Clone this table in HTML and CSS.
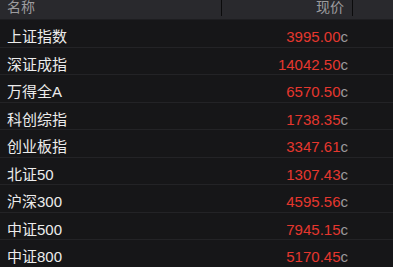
FILE: index.html
```html
<!DOCTYPE html>
<html lang="zh">
<head>
<meta charset="utf-8">
<link rel="stylesheet" href="styles.css">
</head>
<body>
<div class="table">
  <div class="head">
    <div class="c-name">名称</div>
    <div class="c-price">现价</div>
    <div class="c-rest"></div>
  </div>
  <div class="row"><div class="c-name">上证指数</div><div class="c-price"><span class="num">3995.00</span><span class="unit">c</span></div><div class="c-rest"></div></div>
  <div class="row"><div class="c-name">深证成指</div><div class="c-price"><span class="num">14042.50</span><span class="unit">c</span></div><div class="c-rest"></div></div>
  <div class="row"><div class="c-name">万得全A</div><div class="c-price"><span class="num">6570.50</span><span class="unit">c</span></div><div class="c-rest"></div></div>
  <div class="row"><div class="c-name">科创综指</div><div class="c-price"><span class="num">1738.35</span><span class="unit">c</span></div><div class="c-rest"></div></div>
  <div class="row"><div class="c-name">创业板指</div><div class="c-price"><span class="num">3347.61</span><span class="unit">c</span></div><div class="c-rest"></div></div>
  <div class="row"><div class="c-name">北证50</div><div class="c-price"><span class="num">1307.43</span><span class="unit">c</span></div><div class="c-rest"></div></div>
  <div class="row"><div class="c-name">沪深300</div><div class="c-price"><span class="num">4595.56</span><span class="unit">c</span></div><div class="c-rest"></div></div>
  <div class="row"><div class="c-name">中证500</div><div class="c-price"><span class="num">7945.15</span><span class="unit">c</span></div><div class="c-rest"></div></div>
  <div class="row"><div class="c-name">中证800</div><div class="c-price"><span class="num">5170.45</span><span class="unit">c</span></div><div class="c-rest"></div></div>
</div>
</body>
</html>
```
FILE: styles.css
```css
html, body {
  margin: 0;
  padding: 0;
  background: #161618;
  overflow: hidden;
}
.table {
  width: 393px;
  font-family: "Liberation Sans", "Noto Sans CJK SC", sans-serif;
}
.head {
  display: flex;
  height: 19px;
  background: #29292d;
  border-bottom: 1px solid #1e1e21;
  color: #9c9c9f;
  font-size: 14px;
  line-height: 14px;
}
.head .c-name {
  padding-left: 7px;
}
.head .c-price {
  text-align: right;
  padding-right: 8px;
  border-left: 1px solid #0b0b0c;
  border-right: 1px solid #0b0b0c;
  height: 16px;
}
.c-name {
  width: 221px;
  box-sizing: border-box;
  padding-left: 7px;
}
.c-price {
  width: 132px;
  box-sizing: border-box;
  text-align: right;
  padding-right: 5px;
}
.c-rest {
  flex: 1;
}
.row {
  display: flex;
  height: 27.5px;
  box-sizing: border-box;
  border-bottom: 1px solid #232326;
  padding-top: 9px;
  font-size: 15px;
  line-height: 15px;
}
.row .c-name {
  color: #ececec;
}
.row .c-price {
  border-left: 1px solid transparent;
  border-right: 1px solid transparent;
  padding-right: 4px;
}
.num {
  color: #e5372e;
}
.unit {
  color: #9a9a9c;
}
```
